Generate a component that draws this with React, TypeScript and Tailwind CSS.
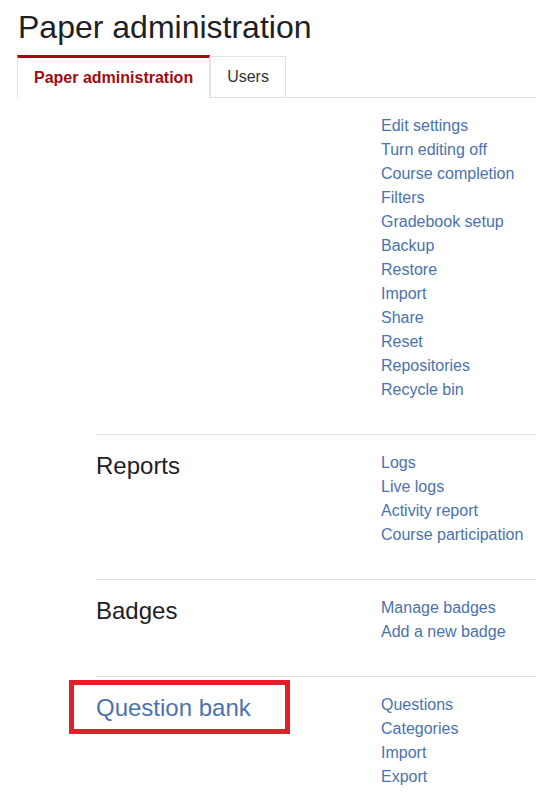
import React from 'react';

const sections: { title?: string; highlight?: boolean; links: string[] }[] = [
  {
    links: [
      'Edit settings',
      'Turn editing off',
      'Course completion',
      'Filters',
      'Gradebook setup',
      'Backup',
      'Restore',
      'Import',
      'Share',
      'Reset',
      'Repositories',
      'Recycle bin',
    ],
  },
  { title: 'Reports', links: ['Logs', 'Live logs', 'Activity report', 'Course participation'] },
  { title: 'Badges', links: ['Manage badges', 'Add a new badge'] },
  { title: 'Question bank', highlight: true, links: ['Questions', 'Categories', 'Import', 'Export'] },
];

export default function App() {
  return (
    <div className="min-h-screen bg-white pt-2 overflow-hidden" style={{ fontFamily: '"Liberation Sans", Arial, sans-serif' }}>
      <h1 className="ml-[18px] text-[32px] leading-[38px] text-[#1d2125] mb-[9px]">Paper administration</h1>

      <ul className="flex items-end ml-[17px] border-b border-[#dee2e6]">
        <li className="-mb-px h-[43px] flex items-center px-4 bg-white border-t-[3px] border-t-[#a30a10] border-x border-x-[#dee2e6] text-[16px] font-bold text-[#a30a10]">
          Paper administration
        </li>
        <li className="-mb-px h-[42px] flex items-center px-4 border border-[#dee2e6] text-[16px] text-[#333]">
          Users
        </li>
      </ul>

      <div className="ml-[96px]">
        {sections.map((s, i) => (
          <div
            key={i}
            className={`grid grid-cols-[285px_1fr] pt-4 pb-8 ${i > 0 ? 'border-t border-[#dee2e6]' : ''}`}
          >
            <div>
              {s.title && (
                <div className="relative inline-block">
                  <h2 className={`text-[24px] leading-[30px] ${s.highlight ? 'text-[#4a72b0]' : 'text-[#1d2125]'}`}>
                    {s.title}
                  </h2>
                  {s.highlight && (
                    <span className="absolute left-[-27px] top-[-13px] w-[221px] h-[54px] border-[5px] border-[#e3202a]" />
                  )}
                </div>
              )}
            </div>
            <ul>
              {s.links.map((l) => (
                <li key={l} className="text-[16px] leading-6 text-[#4a72b0]">
                  {l}
                </li>
              ))}
            </ul>
          </div>
        ))}
      </div>
    </div>
  );
}
